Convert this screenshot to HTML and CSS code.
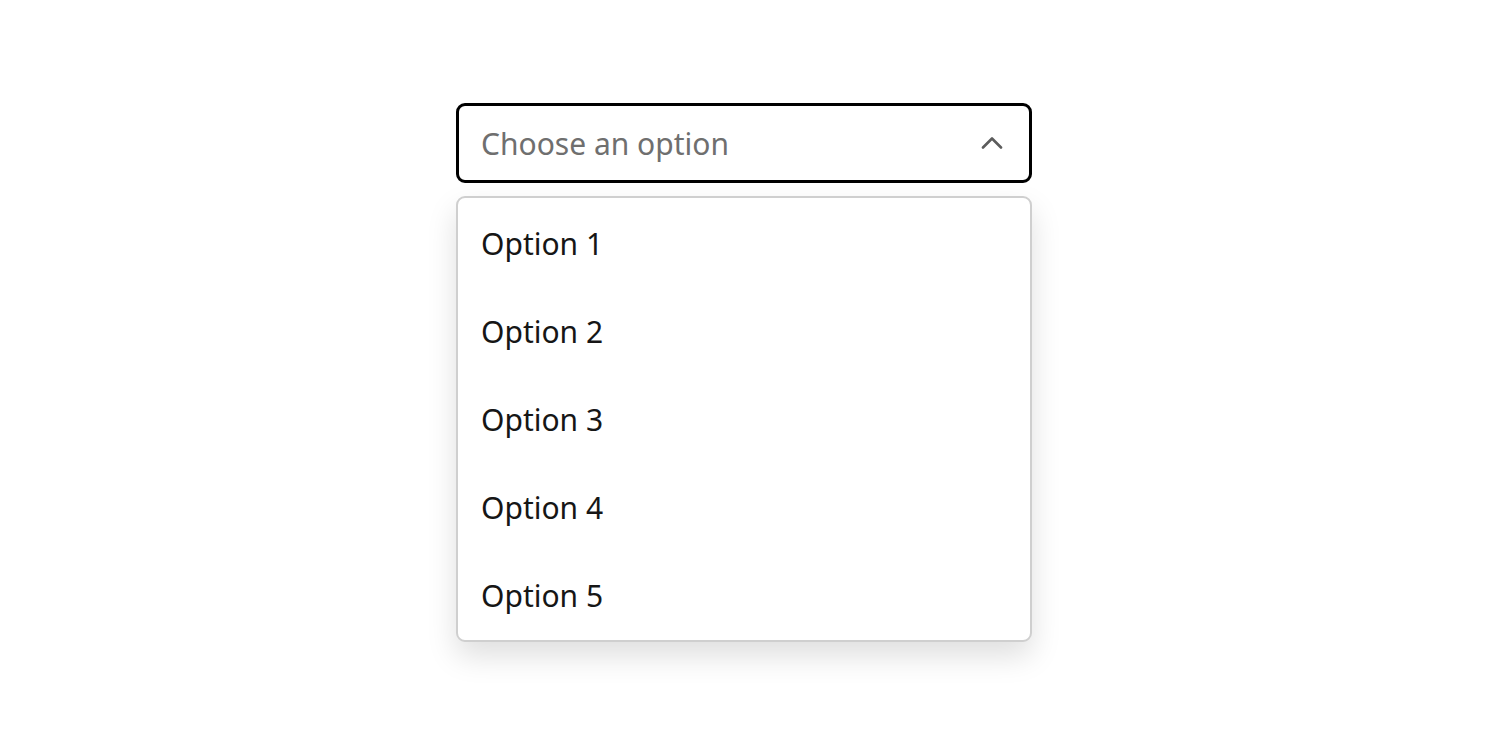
FILE: index.html
```html
<!DOCTYPE html>
<html lang="en">
<head>
<meta charset="utf-8">
<title>Select</title>
<link rel="stylesheet" href="styles.css">
</head>
<body>
<div class="page">
  <div class="select">
    <div class="field">
      <span class="placeholder">Choose an option</span>
      <svg class="chevron" width="22" height="13" viewBox="0 0 22 13" aria-hidden="true">
        <path d="M2 11.5 L11 2.5 L20 11.5" fill="none" stroke="#5c5c5c" stroke-width="2.6" stroke-linecap="round" stroke-linejoin="round"/>
      </svg>
    </div>
    <ul class="menu">
      <li class="item">Option 1</li>
      <li class="item">Option 2</li>
      <li class="item">Option 3</li>
      <li class="item">Option 4</li>
      <li class="item">Option 5</li>
    </ul>
  </div>
</div>
</body>
</html>
```
FILE: styles.css
```css
html, body {
  margin: 0;
  padding: 0;
  background: #ffffff;
}
body {
  font-family: "Noto Sans", "Open Sans", sans-serif;
  color: #161616;
  min-height: 745px;
}
.page {
  display: flex;
  justify-content: center;
  padding: 103px 0 100px;
}
.select {
  width: 576px;
  display: flex;
  flex-direction: column;
  gap: 13px;
}
.field {
  box-sizing: border-box;
  height: 80px;
  border: 3px solid #000;
  border-radius: 9px;
  display: flex;
  align-items: center;
  justify-content: space-between;
  padding: 0 26px 0 22px;
}
.placeholder {
  font-size: 30px;
  color: #6f6f6f;
}
.chevron {
  display: block;
  margin-top: -2px;
}
.menu {
  list-style: none;
  margin: 0;
  padding: 1px 0;
  border: 2px solid #cfcfcf;
  border-radius: 9px;
  box-shadow: 0 14px 30px rgba(0, 0, 0, 0.13);
  background: #fff;
}
.item {
  height: 88px;
  display: flex;
  align-items: center;
  padding-left: 23px;
  font-size: 30px;
  color: #161616;
}
```
